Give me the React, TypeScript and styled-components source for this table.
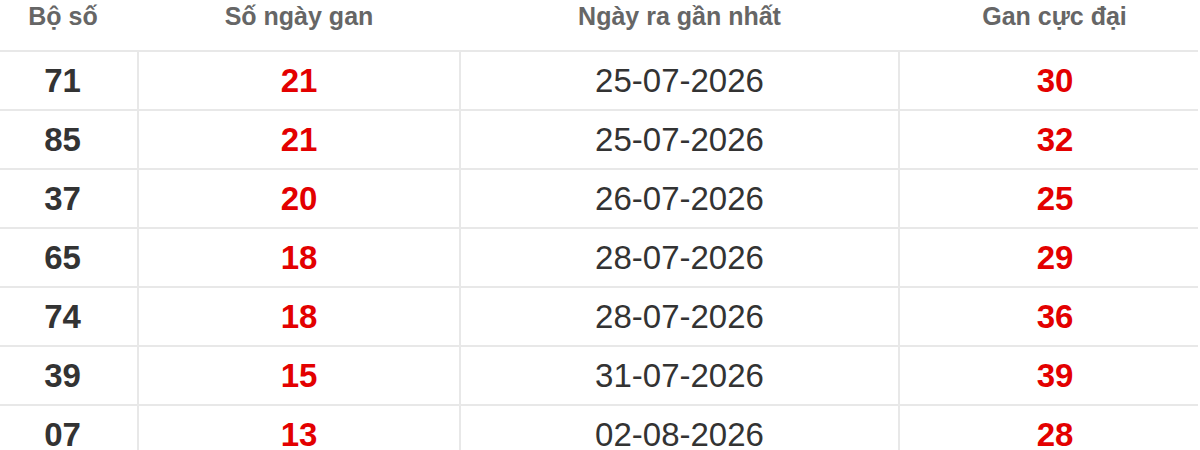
import React from 'react'
import styled, { createGlobalStyle } from 'styled-components'

const GlobalStyle = createGlobalStyle`
  html, body {
    margin: 0;
    padding: 0;
    background: #ffffff;
    overflow: hidden;
  }
  body {
    font-family: 'Liberation Sans', Arial, sans-serif;
  }
`

const Table = styled.table`
  width: 1198px;
  border-collapse: collapse;
  table-layout: fixed;
`

// $nudge moves the text off the column centre, as the original site does
const HeadCell = styled.th<{ $nudge?: number }>`
  height: 51px;
  padding: 4px 0 0;
  box-sizing: border-box;
  vertical-align: top;
  text-align: center;
  font-size: 25px;
  line-height: 25px;
  font-weight: bold;
  color: #666666;
  border-bottom: 2px solid #e8e8e8;
  padding-left: ${({ $nudge }) => ($nudge && $nudge > 0 ? $nudge * 2 : 0)}px;
  padding-right: ${({ $nudge }) => ($nudge && $nudge < 0 ? -$nudge * 2 : 0)}px;
`

const Cell = styled.td<{ $red?: boolean; $bold?: boolean; $first?: boolean; $nudge?: number }>`
  height: 59px;
  padding: 0;
  box-sizing: border-box;
  vertical-align: middle;
  text-align: center;
  font-size: 33px;
  line-height: 33px;
  font-weight: ${({ $bold }) => ($bold ? 'bold' : 'normal')};
  color: ${({ $red }) => ($red ? '#e30000' : '#333333')};
  border-bottom: 2px solid #e8e8e8;
  border-left: ${({ $first }) => ($first ? 'none' : '2px solid #e8e8e8')};
  padding-left: ${({ $nudge }) => ($nudge && $nudge > 0 ? $nudge * 2 : 0)}px;
  padding-right: ${({ $nudge }) => ($nudge && $nudge < 0 ? -$nudge * 2 : 0)}px;
`

const rows = [
  ['71', '21', '25-07-2026', '30'],
  ['85', '21', '25-07-2026', '32'],
  ['37', '20', '26-07-2026', '25'],
  ['65', '18', '28-07-2026', '29'],
  ['74', '18', '28-07-2026', '36'],
  ['39', '15', '31-07-2026', '39'],
  ['07', '13', '02-08-2026', '28'],
]

const App = () => (
  <>
    <GlobalStyle />
    <Table>
      <colgroup>
        <col style={{ width: 138 }} />
        <col style={{ width: 322 }} />
        <col style={{ width: 439 }} />
        <col />
      </colgroup>
      <thead>
        <tr>
          <HeadCell $nudge={-6}>Bộ số</HeadCell>
          <HeadCell>Số ngày gan</HeadCell>
          <HeadCell>Ngày ra gần nhất</HeadCell>
          <HeadCell $nudge={6}>Gan cực đại</HeadCell>
        </tr>
      </thead>
      <tbody>
        {rows.map(([num, days, date, max]) => (
          <tr key={num}>
            <Cell $first $bold $nudge={-6}>{num}</Cell>
            <Cell $red $bold>{days}</Cell>
            <Cell>{date}</Cell>
            <Cell $red $bold $nudge={6}>{max}</Cell>
          </tr>
        ))}
      </tbody>
    </Table>
  </>
)

export default App
